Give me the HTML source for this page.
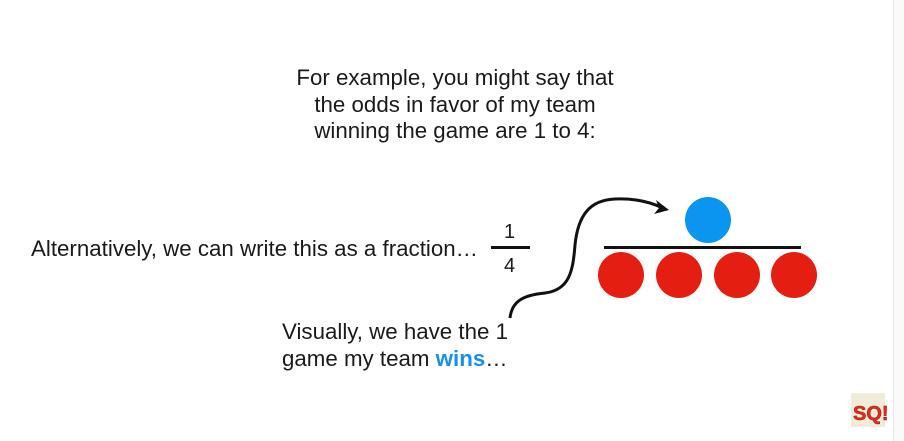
<!DOCTYPE html>
<html><head><style>
body{margin:0;width:904px;height:441px;background:#fff;position:relative;overflow:hidden;font-family:"Liberation Sans",Arial,sans-serif;color:#1a1a1a}
.t{position:absolute;font-size:22.3px;line-height:26.5px;white-space:nowrap}
</style></head><body>
<div style="position:absolute;right:0;top:0;width:10px;height:441px;background:#fafafa;border-left:1px solid #ececec"></div>
<div class="t" style="left:255px;top:65px;width:400px;text-align:center">For example, you might say that<br>the odds in favor of my team<br>winning the game are 1 to 4:</div>
<div class="t" style="left:31px;top:236px">Alternatively, we can write this as a fraction…</div>
<div class="t" style="left:504px;top:219px;font-size:20px">1</div>
<div style="position:absolute;left:491px;top:246px;width:39px;height:3px;background:#111"></div>
<div class="t" style="left:504px;top:253px;font-size:20px">4</div>
<div class="t" style="left:282px;top:319px">Visually, we have the 1<br>game my team <b style="color:#1a8fe8">wins</b>…</div>
<svg width="904" height="441" style="position:absolute;left:0;top:0">
<path d="M510,318 C512,300 525,295 545,293 C570,290 573,270 575,245 C578,215 590,200 615,199 C635,198 650,202 663,208" fill="none" stroke="#111" stroke-width="3"/>
<path d="M656,200 L669,210 L654,214 L659,208 Z" fill="#111"/>
<circle cx="708" cy="220" r="23" fill="#0a96f0"/>
<rect x="604" y="246" width="197" height="3" fill="#111"/>
<circle cx="621" cy="275" r="23" fill="#e41f12"/>
<circle cx="679" cy="275" r="23" fill="#e41f12"/>
<circle cx="737" cy="275" r="23" fill="#e41f12"/>
<circle cx="794" cy="275" r="23" fill="#e41f12"/>
<rect x="851" y="393" width="34" height="34" fill="#f1ecd8"/>
<text x="853" y="420" font-family="Liberation Sans" font-weight="bold" font-size="20" fill="#e52a1e" stroke="#8a1a10" stroke-width="0.5">SQ!</text>
</svg>
</body></html>
